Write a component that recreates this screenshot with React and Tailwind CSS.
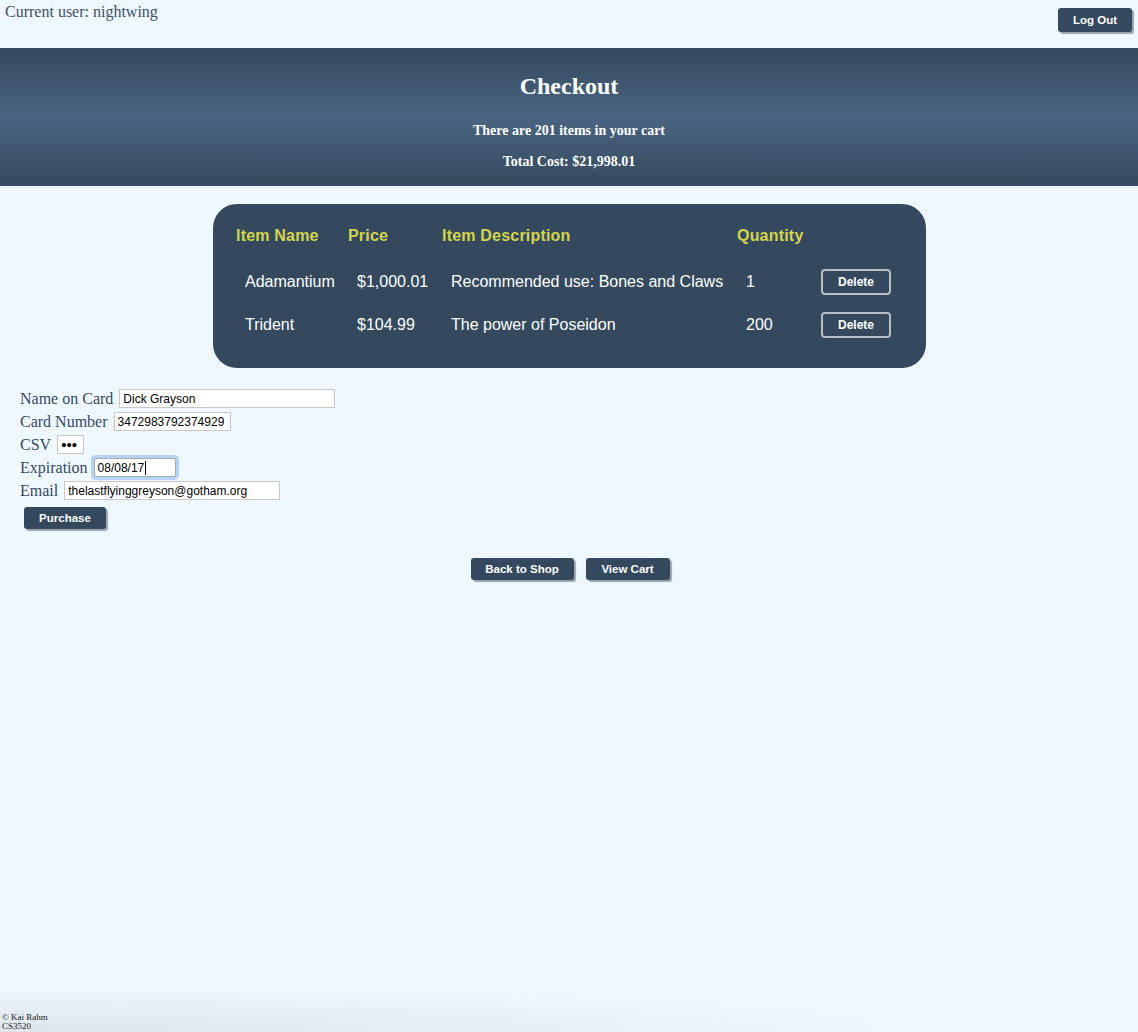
export default function App() {
  const btn =
    "bg-[#34495e] text-white font-bold text-[11.5px] rounded-[3px] shadow-[2px_2px_1px_#9aa3ad] font-['Liberation_Sans',Arial,sans-serif] leading-none pt-[1px]";
  const serif = "font-['Liberation_Serif','Times_New_Roman',serif]";
  const sans = "font-['Liberation_Sans',Arial,sans-serif]";
  const rows = [
    { name: "Adamantium", price: "$1,000.01", desc: "Recommended use: Bones and Claws", qty: "1" },
    { name: "Trident", price: "$104.99", desc: "The power of Poseidon", qty: "200" },
  ];
  const fields = [
    { label: "Name on Card", value: "Dick Grayson", w: "w-[216px]" },
    { label: "Card Number", value: "3472983792374929", w: "w-[117px]" },
    { label: "CSV", value: "•••", w: "w-[27px]", dots: true },
    { label: "Expiration", value: "08/08/17", w: "w-[82px]", focus: true },
    { label: "Email", value: "thelastflyinggreyson@gotham.org", w: "w-[216px]" },
  ];
  return (
    <div className={`min-h-[1032px] bg-[#f0f8ff] flex flex-col ${serif}`}>
      {/* top bar */}
      <div className="h-[48px] flex justify-between items-start">
        <div className="pl-[5px] pt-[3px] text-[16px] leading-[18px] text-[#3d4f63]">Current user: nightwing</div>
        <button className={`${btn} mt-[8px] mr-[6px] w-[74px] h-[24px]`}>Log Out</button>
      </div>

      {/* header */}
      <div className="h-[138px] bg-[linear-gradient(to_bottom,#34495e_0%,#4a6582_50%,#34495e_100%)] text-white flex flex-col items-center">
        <h1 className="mt-[24px] text-[24px] font-bold leading-[28px]">Checkout</h1>
        <p className="mt-[23px] text-[14px] font-bold leading-[16px]">There are 201 items in your cart</p>
        <p className="mt-[15px] text-[14px] font-bold leading-[16px]">Total Cost: $21,998.01</p>
      </div>

      {/* card */}
      <div className="flex justify-center pt-[18px] pl-[1px]">
        <div className={`w-[713px] h-[164px] bg-[#34495e] rounded-[24px] ${sans}`}>
          <div className="grid grid-cols-[112px_94px_295px_84px_auto] pl-[23px] pt-[21px] text-[16px] font-bold text-[#d4d44f] leading-[22px] tracking-[0.2px]">
            <div>Item Name</div>
            <div>Price</div>
            <div>Item Description</div>
            <div>Quantity</div>
            <div></div>
          </div>
          <div className="pt-[13px]">
            {rows.map((r) => (
              <div
                key={r.name}
                className="grid grid-cols-[112px_94px_295px_75px_auto] pl-[32px] h-[43px] items-center text-[16px] text-white"
              >
                <div>{r.name}</div>
                <div>{r.price}</div>
                <div>{r.desc}</div>
                <div>{r.qty}</div>
                <div>
                  <button className="w-[70px] h-[26px] border-2 border-[#b9bec4] rounded-[4px] text-white text-[12px] font-bold leading-none">
                    Delete
                  </button>
                </div>
              </div>
            ))}
          </div>
        </div>
      </div>

      {/* form */}
      <div className="pl-[20px] pt-[19px] text-[16px] text-[#34495e]">
        {fields.map((f) => (
          <div key={f.label} className="flex items-center h-[23px]">
            <span className="leading-[18px]">{f.label}</span>
            <div
              className={`ml-[6px] ${f.w} h-[19px] bg-white border ${
                f.focus
                  ? "border-[#a9a9a9] shadow-[0_0_0_3px_#b4d3f7] rounded-[2px]"
                  : "border-[#c8c8c8]"
              } flex items-center pl-[3px] ${sans} text-[12px] text-black leading-none overflow-hidden whitespace-nowrap`}
            >
              {f.dots ? <span className="text-[15px] tracking-[0px]">•••</span> : f.value}
              {f.focus && <span className="inline-block w-[1px] h-[14px] bg-black ml-[1px]"></span>}
            </div>
          </div>
        ))}
        <button className={`${btn} ml-[4px] mt-[5px] w-[82px] h-[22px]`}>Purchase</button>
      </div>

      {/* nav buttons */}
      <div className="flex justify-center gap-[12px] pt-[29px] pl-[2px]">
        <button className={`${btn} w-[103px] h-[22px]`}>Back to Shop</button>
        <button className={`${btn} w-[84px] h-[22px]`}>View Cart</button>
      </div>

      {/* footer */}
      <div className="mt-auto h-[44px] bg-[radial-gradient(950px_48px_at_0%_100%,#dde4ec,#f0f8ff)] flex flex-col justify-end pl-[2px] pb-[1px] text-[9px] leading-[9px] text-[#222]">
        <div>© Kai Rahm</div>
        <div>CS3520</div>
      </div>
    </div>
  );
}
